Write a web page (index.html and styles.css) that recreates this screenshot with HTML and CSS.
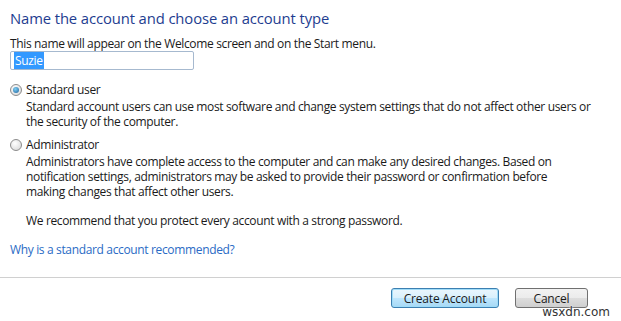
FILE: index.html
```html
<!DOCTYPE html>
<html lang="en">
<head>
    <meta charset="UTF-8">
    <title>Create New Account</title>
    <link rel="stylesheet" href="styles.css">
</head>
<body>
  <div class="page">
    <div class="content">
        <h1>Name the account and choose an account type</h1>
        <p class="hint">This name will appear on the Welcome screen and on the Start menu.</p>
        <div class="name-box"><span class="selected">Suzie</span></div>

        <div class="option first">
            <div class="option-row">
                <span class="radio checked"></span>
                <span class="option-label">Standard user</span>
            </div>
            <p class="option-desc">Standard account users can use most software and change system settings that do not affect other users or the security of the computer.</p>
        </div>

        <div class="option">
            <div class="option-row">
                <span class="radio"></span>
                <span class="option-label">Administrator</span>
            </div>
            <p class="option-desc narrow">Administrators have complete access to the computer and can make any desired changes. Based on notification settings, administrators may be asked to provide their password or confirmation before making changes that affect other users.</p>
            <p class="option-desc recommend">We recommend that you protect every account with a strong password.</p>
        </div>

        <a class="help-link" href="#">Why is a standard account recommended?</a>
    </div>

    <div class="footer">
        <button class="btn btn-default">Create Account</button>
        <button class="btn">Cancel</button>
        <span class="watermark">wsxdn.com</span>
    </div>
  </div>
</body>
</html>
```

FILE: styles.css
```css
* {
    margin: 0;
    padding: 0;
    box-sizing: border-box;
}

body {
    width: 621px;
    height: 321px;
    background: white;
    font-family: "Open Sans", Arial, sans-serif;
    font-size: 12px;
    letter-spacing: -0.35px;
    color: #1a1a1a;
    overflow: hidden;
}

.content {
    padding: 8px 10px 0 10px;
    height: 277px;
}

h1 {
    font-weight: normal;
    font-size: 14.8px;
    line-height: 20px;
    letter-spacing: -0.1px;
    color: #1e3d90;
}

.hint {
    margin-top: 8px;
    line-height: 15px;
}

.name-box {
    width: 184px;
    height: 19px;
    border: 1px solid #a6b9cf;
    border-radius: 2px;
    padding: 1px 3px;
    line-height: 15px;
}

.selected {
    background: #3399ff;
    color: white;
    padding: 0 1px;
}

.option {
    margin-top: 8px;
}

.option.first {
    margin-top: 12px;
}

.option-row {
    display: flex;
    align-items: center;
    gap: 4px;
    height: 15px;
    line-height: 15px;
}

.radio {
    width: 12px;
    height: 12px;
    border-radius: 50%;
    border: 1px solid #8c8c8c;
    background: radial-gradient(circle at 40% 35%, #ffffff, #d4d4d4);
    position: relative;
    flex-shrink: 0;
}

.radio.checked::after {
    content: '';
    position: absolute;
    top: 2px;
    left: 2px;
    width: 6px;
    height: 6px;
    border-radius: 50%;
    background: radial-gradient(circle at 40% 35%, #7fd0f5, #1d5f9a);
}

.option-desc {
    margin-top: 2px;
    margin-left: 16px;
    line-height: 15px;
    padding-right: 4px;
}

.option-desc.narrow {
    max-width: 548px;
}

.recommend {
    margin-top: 14px;
}

.help-link {
    display: block;
    margin-top: 14px;
    color: #2a6bc5;
    text-decoration: none;
    line-height: 15px;
}

.footer {
    border-top: 1px solid #d0d0d0;
    height: 44px;
    display: flex;
    justify-content: flex-end;
    align-items: flex-start;
    gap: 16px;
    padding: 10px 33px 0 0;
    position: relative;
}

.btn {
    height: 20px;
    width: 73px;
    font-family: "Open Sans", Arial, sans-serif;
    font-size: 12px;
    letter-spacing: -0.2px;
    color: #1a1a1a;
    border: 1px solid #707070;
    border-radius: 3px;
    background: linear-gradient(#f2f2f2 0%, #ebebeb 50%, #dddddd 51%, #cfcfcf 100%);
}

.btn-default {
    width: 108px;
    border-color: #3c7fb1;
    background: linear-gradient(#eaf6fd 0%, #d9f0fc 50%, #bee6fd 51%, #a7d9f5 100%);
    box-shadow: inset 0 0 0 1px #9fdcf8;
}

.watermark {
    position: absolute;
    right: 11px;
    bottom: 2px;
    font-family: "DejaVu Sans", sans-serif;
    font-size: 12px;
    letter-spacing: 0;
    color: #333;
    text-shadow: 0 0 2px white, 0 0 2px white;
}
```
